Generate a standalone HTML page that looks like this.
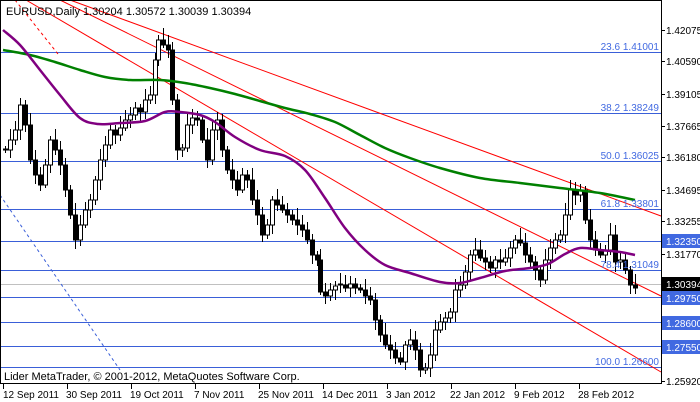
<!DOCTYPE html>
<html><head><meta charset="utf-8"><style>
html,body{margin:0;padding:0;background:#fff;width:700px;height:402px;overflow:hidden}
svg{display:block;font-family:"Liberation Sans",sans-serif}
</style></head><body>
<svg id="s" width="700" height="402" xmlns="http://www.w3.org/2000/svg" shape-rendering="crispEdges">
<rect width="700" height="402" fill="#fff"/>
<g stroke="#3a5fd8" stroke-width="1">
<line x1="0" y1="52.5" x2="661" y2="52.5"/>
<line x1="0" y1="113.5" x2="661" y2="113.5"/>
<line x1="0" y1="161.5" x2="661" y2="161.5"/>
<line x1="0" y1="209.5" x2="661" y2="209.5"/>
<line x1="0" y1="241.5" x2="661" y2="241.5"/>
<line x1="0" y1="270.5" x2="661" y2="270.5"/>
<line x1="0" y1="297.5" x2="661" y2="297.5"/>
<line x1="0" y1="322.5" x2="661" y2="322.5"/>
<line x1="0" y1="346.5" x2="661" y2="346.5"/>
<line x1="0" y1="367.5" x2="661" y2="367.5"/>
</g>
<line x1="0" y1="284.5" x2="661" y2="284.5" stroke="#c0c0c0"/>
<g stroke="#ff0000" stroke-width="1" shape-rendering="auto">
<line x1="70" y1="0" x2="661" y2="216"/>
<line x1="60" y1="0" x2="661" y2="296"/>
<line x1="26" y1="0" x2="661" y2="372"/>
<line x1="15" y1="0" x2="58" y2="54" stroke-dasharray="3,3"/>
</g>
<line x1="0" y1="195" x2="120" y2="370" stroke="#3a5fd8" stroke-dasharray="3,3" shape-rendering="auto"/>
<g id="candles"></g>
<path id="gma" shape-rendering="auto" fill="none" stroke="#008000" stroke-width="2.5"/>
<path id="pma" shape-rendering="auto" fill="none" stroke="#800080" stroke-width="2.5"/>
<g fill="#4169e1" font-size="10" text-anchor="end">
<text x="659" y="50">23.6 1.41001</text>
<text x="659" y="111">38.2 1.38249</text>
<text x="659" y="159">50.0 1.36025</text>
<text x="659" y="207">61.8 1.33801</text>
<text x="659" y="268">78.4 1.31049</text>
<text x="659" y="365">100.0 1.26600</text>
</g>
<text x="6" y="15" font-size="11" fill="#000">EURUSD,Daily  1.30204 1.30572 1.30039 1.30394</text>
<text x="4" y="380" font-size="11" fill="#000">Lider MetaTrader, © 2001-2012, MetaQuotes Software Corp.</text>
<rect x="0.5" y="0.5" width="661" height="383" fill="none" stroke="#000"/>
<g font-size="10" fill="#000">
<text x="666" y="34">1.42075</text><text x="666" y="65">1.40590</text><text x="666" y="98">1.39105</text>
<text x="666" y="130">1.37665</text><text x="666" y="161">1.36180</text><text x="666" y="194">1.34695</text>
<text x="666" y="225">1.33255</text><text x="666" y="258">1.31770</text><text x="666" y="385">1.25920</text>
</g>
<g stroke="#000"><line x1="661" y1="30.5" x2="665" y2="30.5"/><line x1="661" y1="61.5" x2="665" y2="61.5"/><line x1="661" y1="94.5" x2="665" y2="94.5"/><line x1="661" y1="126.5" x2="665" y2="126.5"/><line x1="661" y1="157.5" x2="665" y2="157.5"/><line x1="661" y1="190.5" x2="665" y2="190.5"/><line x1="661" y1="221.5" x2="665" y2="221.5"/><line x1="661" y1="254.5" x2="665" y2="254.5"/><line x1="661" y1="381.5" x2="665" y2="381.5"/></g>
<rect x="662" y="234" width="38" height="14" fill="#4169e1"/><text x="666" y="245" font-size="10" fill="#fff">1.32350</text>
<rect x="662" y="277" width="38" height="14" fill="#000"/><text x="666" y="288" font-size="10" fill="#fff">1.30394</text>
<rect x="662" y="291" width="38" height="14" fill="#4169e1"/><text x="666" y="302" font-size="10" fill="#fff">1.29750</text>
<rect x="662" y="316" width="38" height="14" fill="#4169e1"/><text x="666" y="327" font-size="10" fill="#fff">1.28600</text>
<rect x="662" y="340" width="38" height="14" fill="#4169e1"/><text x="666" y="351" font-size="10" fill="#fff">1.27550</text>
<g stroke="#000"><line x1="3.5" y1="384" x2="3.5" y2="389"/><line x1="67.5" y1="384" x2="67.5" y2="389"/><line x1="131.5" y1="384" x2="131.5" y2="389"/><line x1="195.5" y1="384" x2="195.5" y2="389"/><line x1="259.5" y1="384" x2="259.5" y2="389"/><line x1="323.5" y1="384" x2="323.5" y2="389"/><line x1="387.5" y1="384" x2="387.5" y2="389"/><line x1="451.5" y1="384" x2="451.5" y2="389"/><line x1="515.5" y1="384" x2="515.5" y2="389"/><line x1="579.5" y1="384" x2="579.5" y2="389"/></g>
<g font-size="10" fill="#000">
<text x="3" y="398">12 Sep 2011</text><text x="66" y="398">30 Sep 2011</text><text x="130" y="398">19 Oct 2011</text>
<text x="194" y="398">7 Nov 2011</text><text x="258" y="398">25 Nov 2011</text><text x="322" y="398">14 Dec 2011</text>
<text x="386" y="398">3 Jan 2012</text><text x="450" y="398">22 Jan 2012</text><text x="514" y="398">9 Feb 2012</text>
<text x="578" y="398">28 Feb 2012</text>
</g>
</svg>
<script>
function smooth(pts){var d='M'+pts[0][0]+','+pts[0][1];for(var i=0;i<pts.length-1;i++){var p0=pts[i-1]||pts[i],p1=pts[i],p2=pts[i+1],p3=pts[i+2]||p2;
d+=' C'+(p1[0]+(p2[0]-p0[0])/6)+','+(p1[1]+(p2[1]-p0[1])/6)+' '+(p2[0]-(p3[0]-p1[0])/6)+','+(p2[1]-(p3[1]-p1[1])/6)+' '+p2[0]+','+p2[1];}return d;}
document.getElementById('gma').setAttribute('d',smooth([[3,50],[30,55],[55,62],[80,70],[105,77],[130,80],[160,80],[185,83],[210,88],[235,94],[260,101],[285,108],[310,114],[335,122],[360,135],[385,148],[410,158],[440,168],[480,178],[520,183],[560,188],[600,193],[635,200]]));
document.getElementById('pma').setAttribute('d',smooth([[3,30],[20,45],[40,70],[60,95],[80,118],[98,124],[120,123],[145,121],[165,112],[180,112],[200,115],[215,122],[235,137],[260,150],[285,156],[305,170],[325,198],[345,228],[365,250],[385,265],[410,273],[440,282],[460,283],[480,278],[505,271],[530,268],[548,264],[565,254],[580,248],[600,250],[620,252],[635,255]]));
var k=[[5,150],[10,140],[15,130],[20,105],[25,125],[30,160],[35,175],[40,185],[45,165],[50,140],[55,150],[60,165],[65,190],[70,215],[75,240],[80,225],[85,210],[90,200],[95,180],[100,160],[105,145],[110,130],[115,135],[120,128],[125,120],[130,115],[135,108],[140,112],[145,100],[150,95],[155,60],[158,40],[163,45],[168,50],[172,100],[177,150],[182,148],[187,125],[192,118],[197,120],[202,140],[207,160],[212,130],[217,120],[222,150],[227,170],[232,180],[237,190],[242,175],[247,180],[252,200],[257,215],[262,235],[267,225],[272,200],[277,205],[282,210],[287,215],[292,220],[297,225],[302,230],[307,240],[312,255],[317,260],[320,292],[325,296],[330,290],[335,286],[340,285],[345,288],[350,284],[355,288],[360,290],[365,296],[370,300],[375,320],[380,335],[385,345],[390,350],[395,358],[400,362],[405,345],[410,340],[415,350],[420,370],[425,368],[430,355],[435,330],[440,322],[445,318],[450,312],[455,290],[460,285],[465,272],[470,255],[475,250],[480,258],[485,262],[490,268],[495,260],[500,262],[505,258],[510,248],[515,240],[520,243],[525,255],[530,262],[535,270],[540,280],[545,260],[550,248],[555,240],[560,235],[565,215],[570,190],[575,195],[580,190],[585,220],[590,240],[595,250],[600,255],[605,250],[610,235],[615,262],[620,260],[625,270],[630,285],[635,288]];
var g=document.getElementById('candles'),h='',p=k[0][1];
for(var i=0;i<k.length;i++){var x=k[i][0],c=k[i][1],o=p,t=Math.min(o,c)-4-(i*7%9),b=Math.max(o,c)+3+(i*5%8);
if(Math.abs(o-c)<2){o=c-1;}
h+='<line x1="'+(x+0.5)+'" y1="'+t+'" x2="'+(x+0.5)+'" y2="'+b+'" stroke="#000"/>';
var y=Math.min(o,c),hh=Math.max(Math.abs(o-c),1);
h+='<rect x="'+(x-1.5)+'" y="'+y+'" width="4" height="'+hh+'" fill="'+(c<o?'#fff':'#000')+'" stroke="#000" stroke-width="1"/>';p=c;}
g.innerHTML=h;
</script>
</body></html>
